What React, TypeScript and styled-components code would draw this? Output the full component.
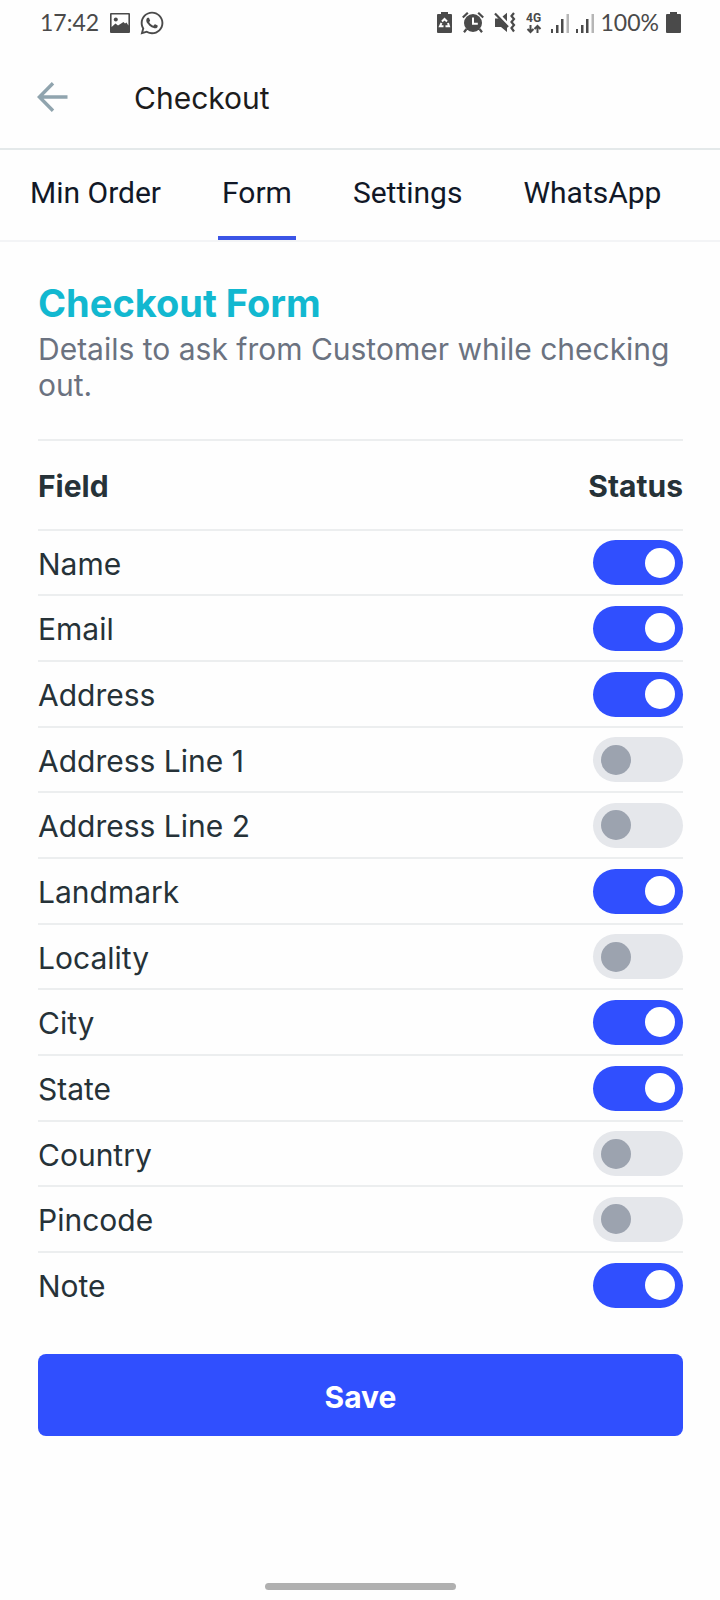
import React, { useState } from 'react';
import styled, { createGlobalStyle } from 'styled-components';
import { FaWhatsapp } from 'react-icons/fa';

const GlobalStyle = createGlobalStyle`
  *, *::before, *::after { box-sizing: border-box; }
  body {
    margin: 0;
    background: #fefefe;
    color: #263238;
    font-family: Inter, 'Liberation Sans', sans-serif;
  }
`;

const Screen = styled.div`
  display: flex;
  flex-direction: column;
  min-height: 100vh;
`;

const StatusBar = styled.div`
  display: flex;
  justify-content: space-between;
  align-items: center;
  height: 45px;
  padding: 0 39px 0 40px;
  color: #4a4a4a;
  font: 23px/45px Lato, sans-serif;
`;

const StatusGroup = styled.div<{ $gap: number }>`
  display: flex;
  align-items: center;
  gap: ${({ $gap }) => $gap}px;

  svg { display: block; flex: none; }
`;

const Header = styled.header`
  display: flex;
  align-items: center;
  height: 105px;
  padding: 0 37px;
  border-bottom: 2px solid #e4e9ea;
`;

const BackButton = styled.button`
  display: flex;
  padding: 0;
  border: 0;
  background: none;
  color: #90a4ae;
  cursor: pointer;
`;

const Title = styled.h1`
  margin: 0 0 0 66px;
  padding-top: 3px;
  color: #1c1c1c;
  font-size: 30px;
  font-weight: 400;
  line-height: 36px;
`;

const Tabs = styled.nav`
  display: flex;
  gap: 53px;
  height: 92px;
  padding: 0 26px;
  border-bottom: 2px solid #f3f4f6;
`;

const Tab = styled.a<{ $active: boolean }>`
  padding: 25px 4px 0;
  border-bottom: 4px solid ${({ $active }) => ($active ? '#3b54e6' : 'transparent')};
  color: #111827;
  font: 30px/36px Roboto, sans-serif;
  text-decoration: none;
  white-space: nowrap;
`;

const Content = styled.main`
  display: flex;
  flex-direction: column;
  padding: 38px 37px 0 38px;
`;

const SectionTitle = styled.h2`
  margin: 0 0 5px;
  color: #12b8d0;
  font-size: 38px;
  font-weight: 700;
  line-height: 46px;
`;

const Description = styled.p`
  margin: 0 0 36px;
  color: #6b7280;
  font-size: 30px;
  line-height: 36px;
`;

const FieldTable = styled.table`
  width: 100%;
  border-collapse: separate;
  border-spacing: 0;
  font-size: 30px;
  line-height: 36px;

  th, td {
    padding: 0;
    border-top: 2px solid #eceeef;
    text-align: left;
    font-weight: 400;
  }
  th:last-child, td:last-child { text-align: right; }
`;

const HeadRow = styled.tr`
  height: 90px;

  && th { padding-top: 2px; font-weight: 700; }
`;

const FieldRow = styled.tr`
  height: 66px;

  &:nth-child(3n + 1) { height: 65px; }
  && th { padding-top: 2px; }
`;

const Toggle = styled.input`
  appearance: none;
  display: flex;
  align-items: center;
  width: 90px;
  height: 45px;
  margin: 0 0 0 auto;
  padding: 0 8px;
  border-radius: 23px;
  background: #e5e7eb;
  cursor: pointer;

  &::before {
    content: '';
    width: 30px;
    height: 30px;
    border-radius: 50%;
    background: #9ca3af;
  }
  &:checked { justify-content: flex-end; background: #304ffe; }
  &:checked::before { background: #fff; }
`;

const SaveButton = styled.button`
  height: 82px;
  margin-top: 37px;
  padding-top: 4px;
  border: 0;
  border-radius: 8px;
  background: #304ffe;
  color: #fff;
  font: 700 30px/36px Inter, sans-serif;
  cursor: pointer;
`;

const HomeIndicator = styled.div`
  width: 191px;
  height: 7px;
  margin: auto auto 10px;
  border-radius: 4px;
  background: #b0b0b0;
`;

const ImageIcon = () => (
  <svg width="22" height="20" viewBox="-2 0 22 20" fill="currentColor" aria-hidden="true">
    <path fillRule="evenodd" d="M1 0h18a1 1 0 0 1 1 1v18a1 1 0 0 1-1 1H1a1 1 0 0 1-1-1V1a1 1 0 0 1 1-1zm.6 1.600v12.400L5.500 10.500l2.500 2L13.500 9l1.500 1.500 1.500-1 1.900 3V1.600z" />
    <circle cx="5.8" cy="6.500" r="2" />
  </svg>
);

const RecycleBatteryIcon = () => (
  <svg width="15" height="21" viewBox="0 0 15 21" aria-hidden="true">
    <path fill="currentColor" d="M4 0h7v2h3q1 0 1 1v17q0 1-1 1H1q-1 0-1-1V3q0-1 1-1h3z" />
    <path fill="none" stroke="#fefefe" strokeWidth="2" d="M5 9.500 7.500 7 10 9.500M11 11l1 3.200H8.500M6.500 14.200H3L4.500 11" />
  </svg>
);

const AlarmIcon = () => (
  <svg width="22" height="21" viewBox="0 0 22 21" aria-hidden="true">
    <circle cx="11" cy="11" r="9" fill="currentColor" />
    <path fill="none" stroke="currentColor" strokeWidth="2.200" d="M.8 5.500 5.800.8M21.200 5.500 16.200.8M4.500 17 2 20.200M17.500 17l2.500 3.200" />
    <path fill="none" stroke="#fefefe" strokeWidth="2" d="M11 5.500V11.800H15.800" />
  </svg>
);

const MuteIcon = () => (
  <svg width="22" height="21" viewBox="0 0 22 21" aria-hidden="true">
    <path fill="currentColor" d="M1 6.500h4l8 8V20l-6-5H1zM8.500 4.500 13 .8v8.400z" />
    <path fill="none" stroke="currentColor" strokeWidth="2.200" d="M1 1.500 14 15" />
    <path fill="none" stroke="currentColor" strokeWidth="2.200" d="M20 1l-2.500 3 2.500 3-2.500 3 2.500 3-2.500 3 2.500 3.500" />
  </svg>
);

const NetworkIcon = () => (
  <svg width="18" height="22" viewBox="0 0 18 22" aria-hidden="true">
    <text x="0" y="10" fill="currentColor" fontFamily="Roboto, sans-serif" fontWeight="700" fontSize="12">4G</text>
    <path fill="none" stroke="currentColor" strokeWidth="2" d="M4.500 13v7M1.500 17l3 3 3-3M11.500 21v-7M8.500 17l3-3 3 3" />
  </svg>
);

const SignalIcon = () => (
  <svg width="18" height="20" viewBox="0 0 18 20" fill="currentColor" aria-hidden="true">
    <path d="M0 16h2v4H0zM5 12h2.500v8H5zM10 6h2.500v14H10z" />
    <path d="M15.500 1H18v19h-2.500z" opacity="0.4" />
  </svg>
);

const BatteryIcon = () => (
  <svg width="15" height="21" viewBox="0 0 15 21" fill="currentColor" aria-hidden="true">
    <path d="M4 0h7v2h3q1 0 1 1v17q0 1-1 1H1q-1 0-1-1V3q0-1 1-1h3z" />
  </svg>
);

const ArrowIcon = () => (
  <svg width="31" height="30" viewBox="0 0 31 30" fill="none" stroke="currentColor" strokeWidth="3.400" aria-hidden="true">
    <path d="M30.500 15H3M16 1.200 2.400 15 16 28.800" />
  </svg>
);

const tabs = ['Min Order', 'Form', 'Settings', 'WhatsApp'];

const initialFields: Record<string, boolean> = {
  Name: true,
  Email: true,
  Address: true,
  'Address Line 1': false,
  'Address Line 2': false,
  Landmark: true,
  Locality: false,
  City: true,
  State: true,
  Country: false,
  Pincode: false,
  Note: true,
};

export default function App() {
  const [activeTab, setActiveTab] = useState('Form');
  const [fields, setFields] = useState(initialFields);

  const toggle = (name: string) =>
    setFields((current) => ({ ...current, [name]: !current[name] }));

  return (
    <Screen>
      <GlobalStyle />
      <StatusBar>
        <StatusGroup $gap={9}>
          <span>17:42</span>
          <ImageIcon />
          <FaWhatsapp size={26} aria-hidden="true" />
        </StatusGroup>
        <StatusGroup $gap={7}>
          <StatusGroup $gap={10}>
            <RecycleBatteryIcon />
            <AlarmIcon />
            <MuteIcon />
            <NetworkIcon />
          </StatusGroup>
          <SignalIcon />
          <SignalIcon />
          <span>100%</span>
          <BatteryIcon />
        </StatusGroup>
      </StatusBar>
      <Header>
        <BackButton type="button" aria-label="Back">
          <ArrowIcon />
        </BackButton>
        <Title>Checkout</Title>
      </Header>
      <Tabs>
        {tabs.map((name) => (
          <Tab
            key={name}
            href="#"
            $active={name === activeTab}
            aria-current={name === activeTab ? 'page' : undefined}
            onClick={(event) => {
              event.preventDefault();
              setActiveTab(name);
            }}
          >
            {name}
          </Tab>
        ))}
      </Tabs>
      <Content>
        <SectionTitle>Checkout Form</SectionTitle>
        <Description>Details to ask from Customer while checking out.</Description>
        <FieldTable>
          <thead>
            <HeadRow>
              <th scope="col">Field</th>
              <th scope="col">Status</th>
            </HeadRow>
          </thead>
          <tbody>
            {Object.entries(fields).map(([name, enabled]) => {
              const id = name.toLowerCase().replace(/ /g, '-');
              return (
                <FieldRow key={name}>
                  <th scope="row">
                    <label htmlFor={id}>{name}</label>
                  </th>
                  <td>
                    <Toggle
                      id={id}
                      type="checkbox"
                      role="switch"
                      checked={enabled}
                      onChange={() => toggle(name)}
                    />
                  </td>
                </FieldRow>
              );
            })}
          </tbody>
        </FieldTable>
        <SaveButton type="button">Save</SaveButton>
      </Content>
      <HomeIndicator />
    </Screen>
  );
}
